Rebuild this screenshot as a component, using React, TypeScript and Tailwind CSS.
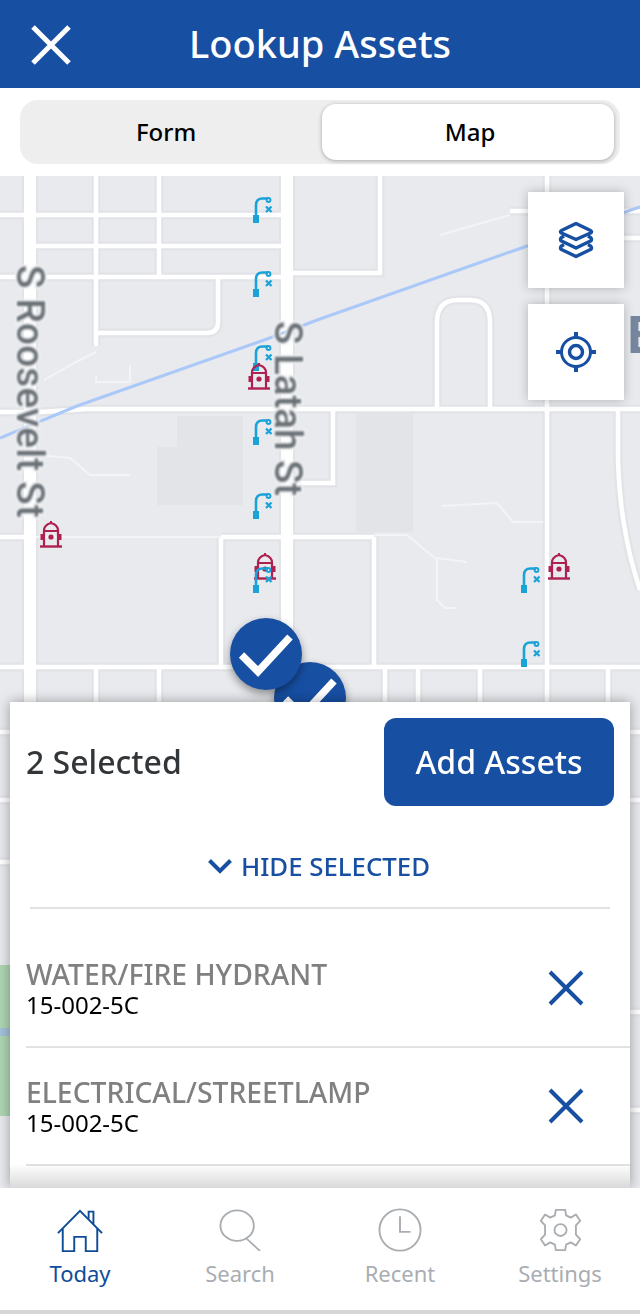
const BLUE = "#174fa3";

function Lamp({ x, y }: { x: number; y: number }) {
  return (
    <g transform={`translate(${x} ${y})`} fill="none" stroke="#1ba3d8">
      <path d="M3 20V8Q3 1.500 9.500 1.500H15" strokeWidth="2.600" />
      <circle cx="15.500" cy="3" r="1.900" strokeWidth="2" />
      <path d="M13 9.500L18.500 15M18.500 9.500L13 15" strokeWidth="2.300" />
      <rect x="0" y="18" width="6" height="8" fill="#1ba3d8" stroke="none" />
    </g>
  );
}

function Hydrant({ cx, top }: { cx: number; top: number }) {
  return (
    <g transform={`translate(${cx - 11} ${top})`} fill="none" stroke="#ae2050">
      <path d="M0 25.500H22" strokeWidth="2.400" />
      <path d="M4 25V9.500Q4 4 11 2Q18 4 18 9.500V25" strokeWidth="2.200" />
      <path d="M4 10H18" strokeWidth="2" />
      <path d="M11 0V2" strokeWidth="2" />
      <rect x="0.500" y="13" width="3.500" height="6" fill="#ae2050" stroke="none" />
      <rect x="18" y="13" width="3.500" height="6" fill="#ae2050" stroke="none" />
      <circle cx="11" cy="16" r="2.600" fill="#ae2050" stroke="none" />
    </g>
  );
}

function CheckPin({ className }: { className: string }) {
  return (
    <div className={`absolute flex h-[72px] w-[72px] items-center justify-center rounded-full bg-[#174fa3] shadow-[0_4px_8px_rgba(0,0,0,0.4)] ${className}`}>
      <svg width="72" height="72" viewBox="0 0 72 72" fill="none">
        <path d="M11.500 37L28 53.500L60 19" stroke="#fff" strokeWidth="7.500" />
      </svg>
    </div>
  );
}

function MapDrawing() {
  const mainRoads = "M30 176V1190M287 176V702";
  const roads =
    "M547 176V702M96 176V346M159 176V276M0 215H285M36 246H285M0 277H285M293 273H380V176M96 333H206Q218 333 218 322V277M0 412H40L87 409H640M0 537H30M221 537H285M221 537V667M0 667H640M96 667V702M159 667V702M385 667V702M418 667V702M480 667V702M608 667V702M333 409V483H292M374 537V667M293 537H374M618 409V460Q620 530 640 590M437 409V322Q437 300 458 300H470Q490 300 490 322V409M0 732H10M0 800H10M0 862H10M630 732H640M630 800H640M630 1012H640M630 1110H640M510 211H547M547 211H640M547 238H640";
  const paths =
    "M36 537H221M36 455L70 458L90 475H130M96 352L76 362L44 380M96 375V382H130V365M375 535H407L437 560V600L445 608H456M437 558L467 562M442 506L497 503L513 522H543M440 235L510 215";
  return (
    <svg className="absolute inset-0 h-full w-full blur-[0.5px]" viewBox="0 176 640 1012" preserveAspectRatio="none" fill="none">
      <rect x="0" y="176" width="640" height="1012" fill="#e9eaee" />
      <path d="M177 416H243V505H157V447H177Z M356 413H413V532H356Z" fill="#e3e4e7" />
      <rect x="0" y="965" width="12" height="151" fill="#aed6b3" />
      <rect x="0" y="1028" width="12" height="8" fill="#a3c1dc" />
      <path d={roads} stroke="#e2e3e7" strokeWidth="9" />
      <path d={mainRoads} stroke="#e2e3e7" strokeWidth="16" />
      <path d={roads} stroke="#fff" strokeWidth="4.500" />
      <path d={mainRoads} stroke="#fff" strokeWidth="12" />
      <path d={paths} stroke="#f4f4f6" strokeWidth="2" />
      <path d="M0 438L77 406L267 339L320 319L510 252L640 207" stroke="#aac8f8" strokeWidth="3" />
      <g className="blur-[0.8px]" fontFamily="Roboto, sans-serif" fontWeight="500" fontSize="38.500" fill="#6a7176" stroke="#f2f3f5" strokeWidth="4" paintOrder="stroke">
        <text transform="translate(17 265) rotate(90)" letterSpacing="0.300">S Roosevelt St</text>
        <text transform="translate(275 321) rotate(90)">S Latah St</text>
      </g>
      <text x="627" y="353" fontFamily="'Liberation Sans', sans-serif" fontWeight="700" fontSize="54" fill="#76869e">E</text>
      {[
        [253, 197],
        [253, 271],
        [253, 345],
        [253, 419],
        [253, 493],
      ].map(([x, y]) => (
        <Lamp key={y} x={x} y={y} />
      ))}
      <Hydrant cx={259} top={363} />
      <Hydrant cx={51} top={521} />
      <Hydrant cx={265} top={553} />
      <Hydrant cx={559} top={553} />
      <Lamp x={253} y={567} />
      <Lamp x={521} y={567} />
      <Lamp x={521} y={641} />
    </svg>
  );
}

function MapButton({ children }: { children: React.ReactNode }) {
  return (
    <button className="flex h-24 w-24 items-center justify-center bg-white shadow-[0_0_10px_rgba(0,0,0,0.25)]">
      {children}
    </button>
  );
}

function SelectedRow({ title }: { title: string }) {
  return (
    <div className="flex h-[118px] items-center justify-between border-b-2 border-[#e2e2e2] pr-[46px]">
      <div className="flex flex-col">
        <span className="text-[28.300px] font-medium leading-[34px] text-[#808080]">{title}</span>
        <span className="text-[24px] leading-[28px] text-black">15-002-5C</span>
      </div>
      <svg width="36" height="36" viewBox="0 0 36 36" fill="none" stroke={BLUE} strokeWidth="4">
        <path d="M2 2L34 34M34 2L2 34" />
      </svg>
    </div>
  );
}

function NavItem({ label, active, children }: { label: string; active?: boolean; children: React.ReactNode }) {
  return (
    <div className={`flex flex-1 flex-col items-center ${active ? "text-[#0f4c97]" : "text-[#a9adb2]"}`}>
      <div className="flex h-[52px] w-[60px] items-center justify-center">{children}</div>
      <span className="mt-[2px] text-[22px] leading-[30px]">{label}</span>
    </div>
  );
}

export default function App() {
  return (
    <div className="flex h-[1314px] w-[640px] flex-col overflow-hidden bg-[#d6d6d6] font-['Noto_Sans',sans-serif]">
      <header className="relative flex h-[88px] shrink-0 items-center justify-center bg-[#174fa3] pb-[2px]">
        <svg className="absolute left-[30px] top-[24px]" width="42" height="42" viewBox="0 0 42 42" fill="none" stroke="#fff" strokeWidth="5">
          <path d="M3 3L39 39M39 3L3 39" />
        </svg>
        <h1 className="text-[38px] font-medium leading-none text-white">Lookup Assets</h1>
      </header>

      <div className="flex h-[88px] shrink-0 items-center bg-white px-5">
        <div className="flex h-16 w-full items-center rounded-[18px] bg-[#eeeeee] pr-[6px]">
          <button className="flex-1 pr-[10px] text-[24px] font-medium text-black">Form</button>
          <button className="h-14 w-[292px] rounded-[14px] bg-white pl-[4px] text-[24px] font-medium text-black shadow-[0_1px_4px_rgba(0,0,0,0.3)]">
            Map
          </button>
        </div>
      </div>

      <main className="relative min-h-0 flex-1 overflow-hidden">
        <MapDrawing />
        <div className="absolute left-[528px] top-4 flex flex-col gap-4">
          <MapButton>
            <svg width="40" height="40" viewBox="0 0 40 40" fill="none" stroke={BLUE} strokeWidth="3.500" strokeLinejoin="round">
              <path d="M20 3.500L34.500 10.500Q36.500 11.500 34.500 13L20 19.500L5.500 13Q3.500 11.500 5.500 10.500Z" />
              <path d="M8 16L5.500 17.500Q3.500 19.500 5.500 21L20 28L34.500 21Q36.500 19.500 34.500 17.500L32 16" />
              <path d="M8 24.500L5.500 26Q3.500 28 5.500 29.500L20 36.500L34.500 29.500Q36.500 28 34.500 26L32 24.500" />
            </svg>
          </MapButton>
          <MapButton>
            <svg width="40" height="40" viewBox="0 0 40 40" fill="none" stroke={BLUE}>
              <circle cx="20" cy="20" r="14.500" strokeWidth="3" />
              <circle cx="20" cy="20" r="6.500" strokeWidth="3.500" />
              <path d="M20 0V6M20 34V40M0 20H6M34 20H40" strokeWidth="4" />
            </svg>
          </MapButton>
        </div>
        <CheckPin className="left-[274px] top-[486px]" />
        <CheckPin className="left-[230px] top-[442px]" />

        <section className="absolute bottom-0 left-[10px] right-[10px] top-[526px] overflow-hidden bg-white shadow-[0_0_12px_rgba(0,0,0,0.35)]">
          <div className="flex items-center justify-between pl-4 pr-4 pt-4">
            <span className="text-[32px] font-medium text-[#333639]">2 Selected</span>
            <button className="h-[88px] w-[230px] rounded-xl bg-[#174fa3] text-[32px] font-medium text-white">Add Assets</button>
          </div>
          <div className="mt-[42px] flex items-center justify-center gap-[9px] pr-[2px] text-[#174fa3]">
            <svg width="24" height="15" viewBox="0 0 24 15" fill="none" stroke={BLUE} strokeWidth="4">
              <path d="M1.500 1.500L12 12L22.500 1.500" />
            </svg>
            <span className="text-[25.800px] font-medium leading-[36px]">HIDE SELECTED</span>
          </div>
          <div className="mx-5 mt-[23px] h-[2px] bg-[#e2e2e2]" />
          <div className="ml-4 mt-[21px]">
            <SelectedRow title="WATER/FIRE HYDRANT" />
            <SelectedRow title="ELECTRICAL/STREETLAMP" />
          </div>
          <div className="absolute bottom-0 left-0 right-0 h-[24px] bg-gradient-to-b from-transparent to-black/15" />
        </section>
      </main>

      <nav className="flex h-[122px] shrink-0 items-start bg-white pt-[16px]">
        <NavItem label="Today" active>
          <svg width="46" height="43" viewBox="0 0 48 48" preserveAspectRatio="none" fill="none" stroke="currentColor" strokeWidth="2">
            <path d="M1 27L24 2L47 27" />
            <path d="M33 11V3H38V17" />
            <path d="M6 22V47H18V31H30V47H42V22" />
          </svg>
        </NavItem>
        <NavItem label="Search">
          <svg width="42" height="42" viewBox="0 0 44 48" preserveAspectRatio="none" fill="none" stroke="currentColor" strokeWidth="2">
            <circle cx="19" cy="19" r="17.500" />
            <path d="M29 34L43 48" />
          </svg>
        </NavItem>
        <NavItem label="Recent">
          <svg width="44" height="44" viewBox="0 0 46 48" preserveAspectRatio="none" fill="none" stroke="currentColor" strokeWidth="2">
            <ellipse cx="23" cy="24" rx="21.500" ry="22.500" />
            <path d="M23 9V26H34" />
          </svg>
        </NavItem>
        <NavItem label="Settings">
          <svg width="43" height="44" viewBox="0 0 46 48" preserveAspectRatio="none" fill="none" stroke="currentColor" strokeWidth="2" strokeLinejoin="round">
            <circle cx="23" cy="24" r="6.500" />
            <path d="M18 2H28L29 8L34 10.500L39.500 7L44 14L39.500 19V29L44 34L39.500 41L34 37.500L29 40L28 46H18L17 40L12 37.500L6.500 41L2 34L6.500 29V19L2 14L6.500 7L12 10.500L17 8Z" />
          </svg>
        </NavItem>
      </nav>
      <div className="h-1 shrink-0 bg-[#d6d6d6]" />
    </div>
  );
}
